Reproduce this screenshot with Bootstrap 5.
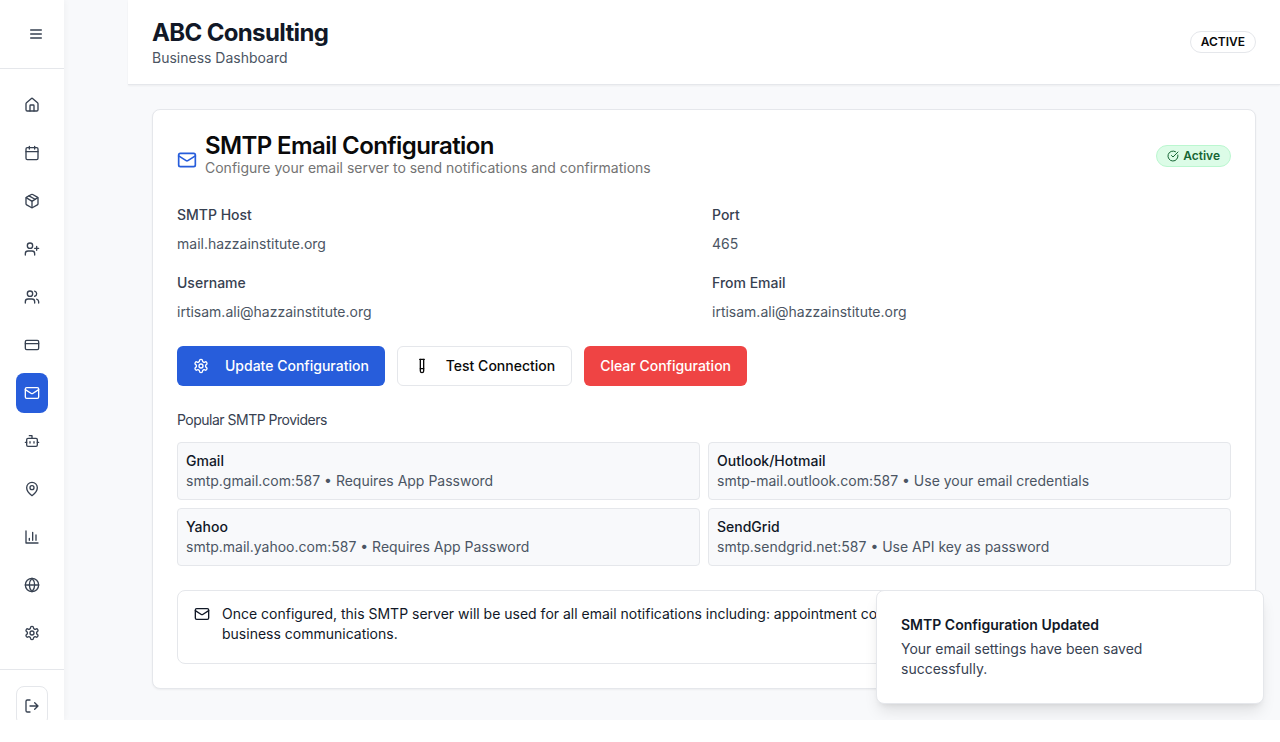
<!DOCTYPE html>
<html lang="en">
<head>
<meta charset="utf-8">
<title>SMTP Email Configuration</title>
<link href="https://cdn.jsdelivr.net/npm/bootstrap@5.3.0/dist/css/bootstrap.min.css" rel="stylesheet">
<style>
html,body{background:#fff;height:100%;}
body{font-family:"Inter","Liberation Sans",sans-serif;font-size:14px;line-height:20px;color:#111827;overflow:hidden;}
.ico{fill:none;stroke:currentColor;stroke-width:2;stroke-linecap:round;stroke-linejoin:round;flex:none;display:block;}
.frame{height:720px;background:#f8f9fb;overflow:hidden;position:relative;}
.side{width:64px;flex:none;background:#fff;box-shadow:1px 0 6px rgba(0,0,0,.04);height:720px;overflow:hidden;color:#374151;position:relative;z-index:2;}
.side-top{height:69px;border-bottom:1px solid #e5e7eb;padding-left:28px;}
.side-nav{padding:16px;border-bottom:1px solid #e5e7eb;}
.side-btn{width:32px;height:40px;border-radius:8px;color:#374151;}
.side-btn.on{background:#275ddb;color:#fff;}
.side-end{padding:16px;}
.side-out{border:1px solid #e5e7eb;}
.main-area{margin-left:64px;}
.top-bar{height:85px;background:#fff;border-bottom:1px solid #e5e7eb;box-shadow:0 1px 2px rgba(0,0,0,.05);padding:0 24px;}
.brand{font-size:24px;line-height:32px;font-weight:700;letter-spacing:-.65px;color:#111827;margin:0;padding-top:1px;}
.brand-sub{color:#4b5563;line-height:20px;margin-top:-1px;}
.state-pill{border:1px solid #e5e7eb;border-radius:999px;font-size:12px;line-height:16px;font-weight:600;padding:2px 10px;color:#0a0a0a;}
.work{padding:24px;}
.panel{background:#fff;border:1px solid #e5e7eb;border-radius:8px;padding:24px;height:580px;box-shadow:0 1px 2px rgba(0,0,0,.05);}
.panel-title{font-size:24px;line-height:24px;font-weight:600;letter-spacing:-.6px;color:#0a0a0a;margin:0;}
.panel-sub{color:#737373;line-height:20px;}
.mail-blue{color:#275ddb;}
.ok-pill{background:#dcfce7;border:1px solid #bbf7d0;border-radius:999px;color:#166534;font-size:12px;line-height:16px;font-weight:600;padding:2px 10px;}
.fields{display:grid;grid-template-columns:1fr 1fr;column-gap:16px;row-gap:19px;margin-top:27px;}
.f-label{font-weight:500;color:#374151;line-height:20px;margin-bottom:9px;}
.f-value{color:#4b5563;line-height:20px;}
.act-row{gap:12px;margin-top:24px;}
.act{height:40px;border-radius:6px;font-size:14px;font-weight:500;line-height:20px;padding:0 15px;border:1px solid transparent;}
.act-blue{background:#275ddb;color:#fff;}
.act-white{background:#fff;border-color:#e5e7eb;color:#0a0a0a;padding:0 16px;}
.act-red{background:#ef4444;color:#fff;}
.prov-head{font-weight:400;color:#374151;letter-spacing:-.5px;margin:24px 0 12px;}
.prov-grid{display:grid;grid-template-columns:1fr 1fr;gap:8px;}
.prov{background:#f8f9fb;border:1px solid #e5e7eb;border-radius:4px;padding:8px;height:58px;}
.prov b{display:block;font-weight:500;color:#111827;}
.prov span{color:#4b5563;}
.note{border:1px solid #e5e7eb;border-radius:8px;padding:13px 16px 19px;margin-top:24px;color:#111827;white-space:nowrap;}
.note .ico{margin-top:2px;}
.toast-box{position:absolute;right:16px;bottom:16px;width:388px;background:#fff;border:1px solid #e5e7eb;border-radius:8px;padding:24px 32px 24px 24px;box-shadow:0 10px 15px -3px rgba(0,0,0,.1),0 4px 6px -4px rgba(0,0,0,.1);z-index:5;}
.toast-h{font-weight:600;color:#111827;margin-bottom:4px;}
.toast-p{color:#374151;}
</style>
</head>
<body>
<div class="frame d-flex">
  <aside class="side">
    <div class="side-top d-flex align-items-center">
      <svg class="ico" width="16" height="16" viewBox="0 0 24 24"><path d="M4 12h16M4 6h16M4 18h16"/></svg>
    </div>
    <nav class="side-nav d-flex flex-column gap-2">
      <a class="side-btn d-flex align-items-center justify-content-center"><svg class="ico" width="16" height="16" viewBox="0 0 24 24"><path d="M15 21v-8a1 1 0 0 0-1-1h-4a1 1 0 0 0-1 1v8"/><path d="M3 10a2 2 0 0 1 .709-1.528l7-5.999a2 2 0 0 1 2.582 0l7 5.999A2 2 0 0 1 21 10v9a2 2 0 0 1-2 2H5a2 2 0 0 1-2-2z"/></svg></a>
      <a class="side-btn d-flex align-items-center justify-content-center"><svg class="ico" width="16" height="16" viewBox="0 0 24 24"><path d="M8 2v4M16 2v4"/><rect x="3" y="4" width="18" height="18" rx="2"/><path d="M3 10h18"/></svg></a>
      <a class="side-btn d-flex align-items-center justify-content-center"><svg class="ico" width="16" height="16" viewBox="0 0 24 24"><path d="M11 21.73a2 2 0 0 0 2 0l7-4A2 2 0 0 0 21 16V8a2 2 0 0 0-1-1.73l-7-4a2 2 0 0 0-2 0l-7 4A2 2 0 0 0 3 8v8a2 2 0 0 0 1 1.73z"/><path d="M12 22V12"/><path d="m3.3 7 7.703 4.734a2 2 0 0 0 1.994 0L20.7 7"/><path d="m7.5 4.27 9 5.15"/></svg></a>
      <a class="side-btn d-flex align-items-center justify-content-center"><svg class="ico" width="16" height="16" viewBox="0 0 24 24"><path d="M16 21v-2a4 4 0 0 0-4-4H6a4 4 0 0 0-4 4v2"/><circle cx="9" cy="7" r="4"/><path d="M19 8v6M22 11h-6"/></svg></a>
      <a class="side-btn d-flex align-items-center justify-content-center"><svg class="ico" width="16" height="16" viewBox="0 0 24 24"><path d="M16 21v-2a4 4 0 0 0-4-4H6a4 4 0 0 0-4 4v2"/><circle cx="9" cy="7" r="4"/><path d="M22 21v-2a4 4 0 0 0-3-3.87"/><path d="M16 3.13a4 4 0 0 1 0 7.75"/></svg></a>
      <a class="side-btn d-flex align-items-center justify-content-center"><svg class="ico" width="16" height="16" viewBox="0 0 24 24"><rect x="2" y="5" width="20" height="14" rx="2"/><path d="M2 10h20"/></svg></a>
      <a class="side-btn on d-flex align-items-center justify-content-center"><svg class="ico" width="16" height="16" viewBox="0 0 24 24"><rect x="2" y="4" width="20" height="16" rx="2"/><path d="m22 7-8.97 5.7a1.94 1.94 0 0 1-2.06 0L2 7"/></svg></a>
      <a class="side-btn d-flex align-items-center justify-content-center"><svg class="ico" width="16" height="16" viewBox="0 0 24 24"><path d="M12 8V4H8"/><rect x="4" y="8" width="16" height="12" rx="2"/><path d="M2 14h2M20 14h2M15 13v2M9 13v2"/></svg></a>
      <a class="side-btn d-flex align-items-center justify-content-center"><svg class="ico" width="16" height="16" viewBox="0 0 24 24"><path d="M20 10c0 6-8 12-8 12s-8-6-8-12a8 8 0 0 1 16 0Z"/><circle cx="12" cy="10" r="3"/></svg></a>
      <a class="side-btn d-flex align-items-center justify-content-center"><svg class="ico" width="16" height="16" viewBox="0 0 24 24"><path d="M3 3v18h18"/><path d="M18 17V9M13 17V5M8 17v-3"/></svg></a>
      <a class="side-btn d-flex align-items-center justify-content-center"><svg class="ico" width="16" height="16" viewBox="0 0 24 24"><circle cx="12" cy="12" r="10"/><path d="M12 2a14.5 14.5 0 0 0 0 20 14.5 14.5 0 0 0 0-20"/><path d="M2 12h20"/></svg></a>
      <a class="side-btn d-flex align-items-center justify-content-center"><svg class="ico" width="16" height="16" viewBox="0 0 24 24"><path d="M12.22 2h-.44a2 2 0 0 0-2 2v.18a2 2 0 0 1-1 1.73l-.43.25a2 2 0 0 1-2 0l-.15-.08a2 2 0 0 0-2.73.73l-.22.38a2 2 0 0 0 .73 2.73l.15.1a2 2 0 0 1 1 1.72v.51a2 2 0 0 1-1 1.74l-.15.09a2 2 0 0 0-.73 2.73l.22.38a2 2 0 0 0 2.73.73l.15-.08a2 2 0 0 1 2 0l.43.25a2 2 0 0 1 1 1.73V20a2 2 0 0 0 2 2h.44a2 2 0 0 0 2-2v-.18a2 2 0 0 1 1-1.73l.43-.25a2 2 0 0 1 2 0l.15.08a2 2 0 0 0 2.73-.73l.22-.39a2 2 0 0 0-.73-2.73l-.15-.08a2 2 0 0 1-1-1.74v-.5a2 2 0 0 1 1-1.74l.15-.09a2 2 0 0 0 .73-2.73l-.22-.38a2 2 0 0 0-2.73-.73l-.15.08a2 2 0 0 1-2 0l-.43-.25a2 2 0 0 1-1-1.73V4a2 2 0 0 0-2-2z"/><circle cx="12" cy="12" r="3"/></svg></a>
    </nav>
    <div class="side-end">
      <a class="side-btn side-out d-flex align-items-center justify-content-center"><svg class="ico" width="16" height="16" viewBox="0 0 24 24"><path d="M9 21H5a2 2 0 0 1-2-2V5a2 2 0 0 1 2-2h4"/><path d="m16 17 5-5-5-5M21 12H9"/></svg></a>
    </div>
  </aside>
  <div class="main-area flex-grow-1">
    <header class="top-bar d-flex align-items-center justify-content-between">
      <div>
        <h1 class="brand">ABC Consulting</h1>
        <div class="brand-sub">Business Dashboard</div>
      </div>
      <span class="state-pill">ACTIVE</span>
    </header>
    <main class="work">
      <section class="panel">
        <div class="d-flex align-items-center justify-content-between">
          <div class="d-flex align-items-center gap-2">
            <svg class="ico mail-blue mt-2" width="20" height="20" viewBox="0 0 24 24"><rect x="2" y="4" width="20" height="16" rx="2"/><path d="m22 7-8.97 5.7a1.94 1.94 0 0 1-2.06 0L2 7"/></svg>
            <div>
              <h2 class="panel-title">SMTP Email Configuration</h2>
              <div class="panel-sub">Configure your email server to send notifications and confirmations</div>
            </div>
          </div>
          <span class="ok-pill d-inline-flex align-items-center gap-1">
            <svg class="ico" width="12" height="12" viewBox="0 0 24 24"><path d="M21.801 10A10 10 0 1 1 17 3.335"/><path d="m9 11 3 3L22 4"/></svg>Active</span>
        </div>
        <div class="fields">
          <div><div class="f-label">SMTP Host</div><div class="f-value">mail.hazzainstitute.org</div></div>
          <div><div class="f-label">Port</div><div class="f-value">465</div></div>
          <div><div class="f-label">Username</div><div class="f-value">irtisam.ali@hazzainstitute.org</div></div>
          <div><div class="f-label">From Email</div><div class="f-value">irtisam.ali@hazzainstitute.org</div></div>
        </div>
        <div class="d-flex act-row">
          <button class="btn act act-blue d-inline-flex align-items-center gap-3"><svg class="ico" width="16" height="16" viewBox="0 0 24 24"><path d="M12.22 2h-.44a2 2 0 0 0-2 2v.18a2 2 0 0 1-1 1.73l-.43.25a2 2 0 0 1-2 0l-.15-.08a2 2 0 0 0-2.73.73l-.22.38a2 2 0 0 0 .73 2.73l.15.1a2 2 0 0 1 1 1.72v.51a2 2 0 0 1-1 1.74l-.15.09a2 2 0 0 0-.73 2.73l.22.38a2 2 0 0 0 2.73.73l.15-.08a2 2 0 0 1 2 0l.43.25a2 2 0 0 1 1 1.73V20a2 2 0 0 0 2 2h.44a2 2 0 0 0 2-2v-.18a2 2 0 0 1 1-1.73l.43-.25a2 2 0 0 1 2 0l.15.08a2 2 0 0 0 2.73-.73l.22-.39a2 2 0 0 0-.73-2.73l-.15-.08a2 2 0 0 1-1-1.74v-.5a2 2 0 0 1 1-1.74l.15-.09a2 2 0 0 0 .73-2.73l-.22-.38a2 2 0 0 0-2.73-.73l-.15.08a2 2 0 0 1-2 0l-.43-.25a2 2 0 0 1-1-1.73V4a2 2 0 0 0-2-2z"/><circle cx="12" cy="12" r="3"/></svg>Update Configuration</button>
          <button class="btn act act-white d-inline-flex align-items-center gap-3"><svg class="ico" width="16" height="16" viewBox="0 0 24 24"><path d="M14.5 2v17.5c0 1.4-1.1 2.5-2.5 2.5-1.4 0-2.5-1.1-2.5-2.5V2"/><path d="M8.5 2h7"/><path d="M14.5 16h-5"/></svg>Test Connection</button>
          <button class="btn act act-red">Clear Configuration</button>
        </div>
        <div class="prov-head">Popular SMTP Providers</div>
        <div class="prov-grid">
          <div class="prov"><b>Gmail</b><span>smtp.gmail.com:587 • Requires App Password</span></div>
          <div class="prov"><b>Outlook/Hotmail</b><span>smtp-mail.outlook.com:587 • Use your email credentials</span></div>
          <div class="prov"><b>Yahoo</b><span>smtp.mail.yahoo.com:587 • Requires App Password</span></div>
          <div class="prov"><b>SendGrid</b><span>smtp.sendgrid.net:587 • Use API key as password</span></div>
        </div>
        <div class="note d-flex gap-2">
          <svg class="ico me-1" width="16" height="16" viewBox="0 0 24 24"><rect x="2" y="4" width="20" height="16" rx="2"/><path d="m22 7-8.97 5.7a1.94 1.94 0 0 1-2.06 0L2 7"/></svg>
          <div>Once configured, this SMTP server will be used for all email notifications including: appointment confirmations, reminders, and other<br>business communications.</div>
        </div>
      </section>
    </main>
  </div>
  <div class="toast-box">
    <div class="toast-h">SMTP Configuration Updated</div>
    <div class="toast-p">Your email settings have been saved successfully.</div>
  </div>
</div>
<script src="https://cdn.jsdelivr.net/npm/bootstrap@5.3.0/dist/js/bootstrap.bundle.min.js"></script>
</body>
</html>
